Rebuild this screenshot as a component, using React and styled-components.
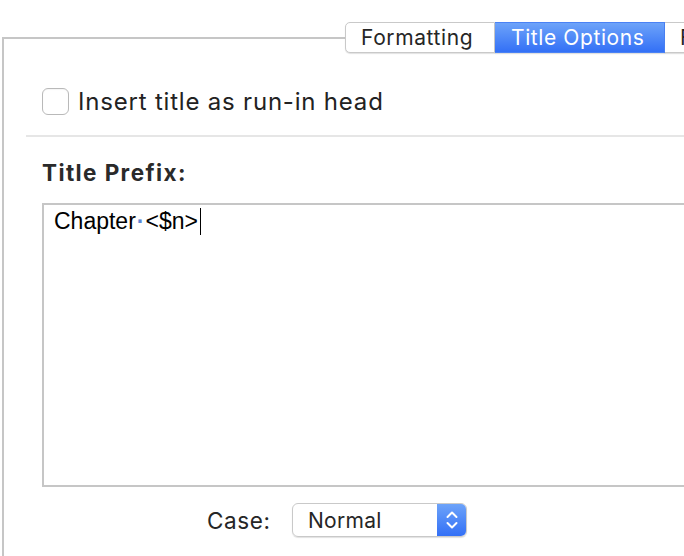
import React from 'react'
import styled, { createGlobalStyle } from 'styled-components'

const GlobalStyle = createGlobalStyle`
  html, body {
    margin: 0;
    background: #ffffff;
    overflow: hidden;
  }
  body {
    font-family: Inter, "Liberation Sans", sans-serif;
    color: #262626;
  }
`

const Page = styled.div`
  width: 684px;
  height: 556px;
  padding-top: 22px;
  box-sizing: border-box;
  overflow: hidden;
`

const TabBar = styled.div`
  display: flex;
  margin-left: 345px;
  height: 31px;
  margin-bottom: -16px;
  position: relative;
  z-index: 1;
`

const Tab = styled.div`
  width: ${({ w }) => w}px;
  flex-shrink: 0;
  height: 31px;
  box-sizing: border-box;
  padding-left: ${({ pad }) => pad}px;
  display: flex;
  align-items: center;
  font-size: 21px;
  letter-spacing: 0.6px;
  white-space: nowrap;
  color: ${({ active }) => (active ? '#ffffff' : '#262626')};
  background: ${({ active }) =>
    active ? 'linear-gradient(#6da3f9, #3370f6)' : '#ffffff'};
  border: 1px solid ${({ active }) => (active ? '#4a82f5' : '#c9c9c9')};
  border-left: ${({ first }) => (first ? '1px solid #c9c9c9' : 'none')};
  border-radius: ${({ first }) => (first ? '5px 0 0 5px' : '0')};
  box-shadow: 0 1px 1px rgba(0, 0, 0, 0.12);
`

const Panel = styled.div`
  margin-left: 2px;
  width: 900px;
  height: 600px;
  border-left: 2px solid #c6c6c6;
  border-top: 2px solid #c6c6c6;
`

const CheckRow = styled.label`
  display: flex;
  align-items: center;
  gap: 9px;
  padding: 48px 0 0 38px;
  font-size: 24px;
  letter-spacing: 0.8px;
  color: #222;
`

const CheckBox = styled.span`
  width: 27px;
  height: 27px;
  box-sizing: border-box;
  border: 1px solid #b9b9b9;
  border-radius: 6px;
  background: #fff;
  box-shadow: inset 0 1px 1px rgba(0, 0, 0, 0.04);
`

const Separator = styled.div`
  margin: 19px 0 0 22px;
  height: 2px;
  background: #e6e6e6;
`

const Section = styled.div`
  padding-left: 38px;
`

const Heading = styled.div`
  margin-top: 22px;
  font-size: 22.5px;
  font-weight: 700;
  letter-spacing: 1.4px;
  line-height: 28px;
  color: #2a2a2a;
`

const TextBox = styled.div`
  margin-top: 16px;
  width: 700px;
  height: 284px;
  box-sizing: border-box;
  border: 2px solid #c6c6c6;
  padding: 3px 10px;
  font-family: "Liberation Sans", Arial, sans-serif;
  font-size: 23px;
  line-height: 27px;
  color: #000;
  display: flex;
  align-items: flex-start;
`

const Dot = styled.span`
  color: #5b86d6;
  font-weight: 700;
  margin: 0 1px;
`

const Caret = styled.span`
  display: inline-block;
  width: 1.5px;
  height: 27px;
  background: #000;
  margin-left: 2px;
`

const CaseRow = styled.div`
  display: flex;
  align-items: center;
  gap: 20px;
  margin-top: 16px;
  padding-left: 203px;
`

const CaseLabel = styled.span`
  width: 65px;
  font-size: 22.5px;
  letter-spacing: 0.6px;
  color: #262626;
`

const Select = styled.div`
  width: 175px;
  height: 34px;
  box-sizing: border-box;
  border: 1px solid #c9c9c9;
  border-radius: 6px;
  box-shadow: 0 1px 1px rgba(0, 0, 0, 0.12);
  display: flex;
  overflow: hidden;
`

const SelectText = styled.span`
  flex: 1;
  display: flex;
  align-items: center;
  padding-left: 15px;
  font-size: 21px;
  letter-spacing: 0.3px;
  color: #262626;
`

const Stepper = styled.span`
  width: 29px;
  background: linear-gradient(#6da3f9, #3370f6);
  display: flex;
  align-items: center;
  justify-content: center;
`

const App = () => (
  <>
    <GlobalStyle />
    <Page>
      <TabBar>
        <Tab first w={150} pad={15}>Formatting</Tab>
        <Tab active w={170} pad={16}>Title Options</Tab>
        <Tab w={60} pad={15}>F</Tab>
      </TabBar>
      <Panel>
        <CheckRow>
          <CheckBox />
          Insert title as run-in head
        </CheckRow>
        <Separator />
        <Section>
          <Heading>Title Prefix:</Heading>
          <TextBox>
            Chapter<Dot>·</Dot>&lt;$n&gt;<Caret />
          </TextBox>
        </Section>
        <CaseRow>
          <CaseLabel>Case:</CaseLabel>
          <Select>
            <SelectText>Normal</SelectText>
            <Stepper>
              <svg width="14" height="22" viewBox="0 0 14 22" fill="none">
                <path d="M2.5 8 L7 3.5 L11.5 8" stroke="#fff" strokeWidth="2" strokeLinecap="round" strokeLinejoin="round" />
                <path d="M2.5 14 L7 18.5 L11.5 14" stroke="#fff" strokeWidth="2" strokeLinecap="round" strokeLinejoin="round" />
              </svg>
            </Stepper>
          </Select>
        </CaseRow>
      </Panel>
    </Page>
  </>
)

export default App
